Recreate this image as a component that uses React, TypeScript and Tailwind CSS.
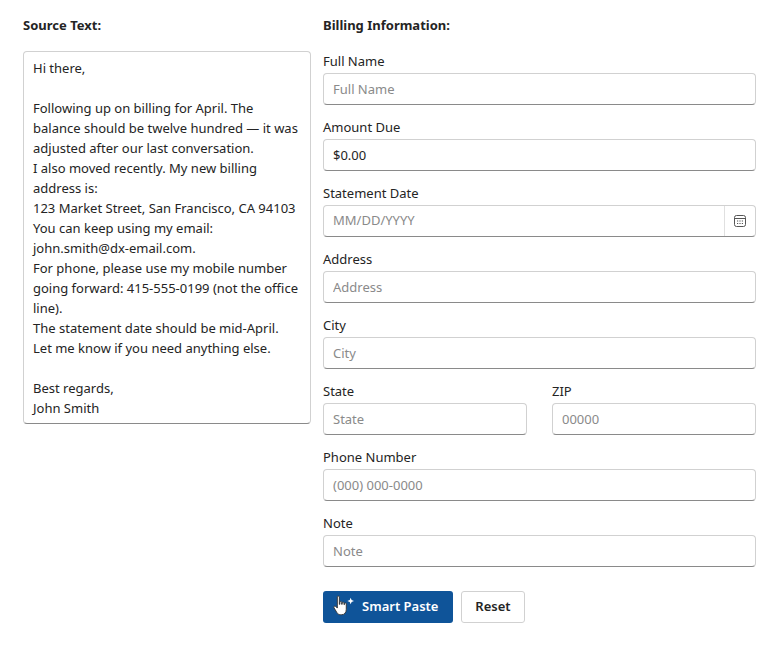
const inp =
  "h-[32px] w-full rounded-[4px] border border-[#d1d1d1] border-b-[#8a8a8a] bg-white px-[9px] text-[13px] text-[#242424] placeholder:text-[#8a8a8a] outline-none";

function Field({ label, ph, value, className = "" }: { label: string; ph?: string; value?: string; className?: string }) {
  return (
    <div className={"flex flex-col " + className}>
      <label className="h-[22px] text-[13px] leading-[20px] text-[#242424]">{label}</label>
      <input className={inp} placeholder={ph} defaultValue={value} />
    </div>
  );
}

const lines = [
  "Hi there,",
  "",
  "Following up on billing for April. The",
  "balance should be twelve hundred — it was",
  "adjusted after our last conversation.",
  "I also moved recently. My new billing",
  "address is:",
  "123 Market Street, San Francisco, CA 94103",
  "You can keep using my email:",
  "john.smith@dx-email.com.",
  "For phone, please use my mobile number",
  "going forward: 415-555-0199 (not the office",
  "line).",
  "The statement date should be mid-April.",
  "Let me know if you need anything else.",
  "",
  "Best regards,",
  "John Smith",
];

export default function App() {
  return (
    <div className="flex gap-[12px] bg-white pl-[23px] pt-[16px] text-[#242424]" style={{ fontFamily: '"Segoe UI","Noto Sans",sans-serif' }}>
      <div className="w-[288px]">
        <div className="h-[35px] text-[13px] font-bold leading-[18px]">Source Text:</div>
        <div className="rounded-[4px] border border-[#d1d1d1] border-b-[#8a8a8a] px-[9px] pt-[6px] pb-[5px] text-[13px] leading-[20px]">
          {lines.map((l, i) => (
            <div key={i} className="h-[20px] whitespace-nowrap">{l}</div>
          ))}
        </div>
      </div>
      <div className="w-[433px]">
        <div className="h-[35px] text-[13px] font-bold leading-[18px]">Billing Information:</div>
        <div className="flex flex-col gap-[12px]">
          <Field label="Full Name" ph="Full Name" />
          <Field label="Amount Due" value="$0.00" />
          <div className="flex flex-col">
            <label className="h-[22px] text-[13px] leading-[20px]">Statement Date</label>
            <div className="flex h-[32px] rounded-[4px] border border-[#d1d1d1] border-b-[#8a8a8a]">
              <input className="flex-1 px-[9px] text-[13px] placeholder:text-[#8a8a8a] outline-none" placeholder="MM/DD/YYYY" />
              <div className="flex w-[31px] items-center justify-center border-l border-[#e0e0e0]">
                <svg width="14" height="14" viewBox="0 0 14 14" fill="none" stroke="#555" strokeWidth="1">
                  <rect x="1.5" y="1.5" width="11" height="11" rx="2" />
                  <path d="M1.5 4.5h11" />
                  <path d="M4 7h1.2M6.4 7h1.2M8.8 7h1.2M4 9.5h1.2M6.4 9.5h1.2M8.8 9.5h1.2" strokeWidth="1.2" />
                </svg>
              </div>
            </div>
          </div>
          <Field label="Address" ph="Address" />
          <Field label="City" ph="City" />
          <div className="flex gap-[25px]">
            <Field label="State" ph="State" className="w-[204px]" />
            <Field label="ZIP" ph="00000" className="flex-1" />
          </div>
          <Field label="Phone Number" ph="(000) 000-0000" />
          <Field label="Note" ph="Note" />
        </div>
        <div className="mt-[24px] flex gap-[8px]">
          <button className="flex h-[32px] w-[130px] items-center gap-[5px] rounded-[3px] bg-[#0f5499] pl-[8px] text-[13px] font-semibold text-white">
            <svg width="26" height="24" viewBox="0 0 18 18" fill="white" stroke="#333" strokeWidth="0.7">
              <path d="M4 1.5c0-.9 1.5-.9 1.5 0V7h.4V5.6c0-.9 1.4-.9 1.4 0V7h.3V6c0-.9 1.4-.9 1.4 0v1.2h.3v-.6c0-.9 1.4-.9 1.4 0v4.2c0 2.3-1.3 4-3.4 4H6.4c-1.4 0-2.1-.7-2.8-1.7L1.5 9.6c-.5-.9.5-1.7 1.3-1L4 9.8z" />
              <path d="M14 2l.7 1.8 1.8.7-1.8.7L14 7l-.7-1.8-1.8-.7 1.8-.7z" stroke="none" />
            </svg>
            Smart Paste
          </button>
          <button className="h-[32px] w-[64px] rounded-[3px] border border-[#d1d1d1] bg-white text-[13px] font-semibold">Reset</button>
        </div>
      </div>
    </div>
  );
}
